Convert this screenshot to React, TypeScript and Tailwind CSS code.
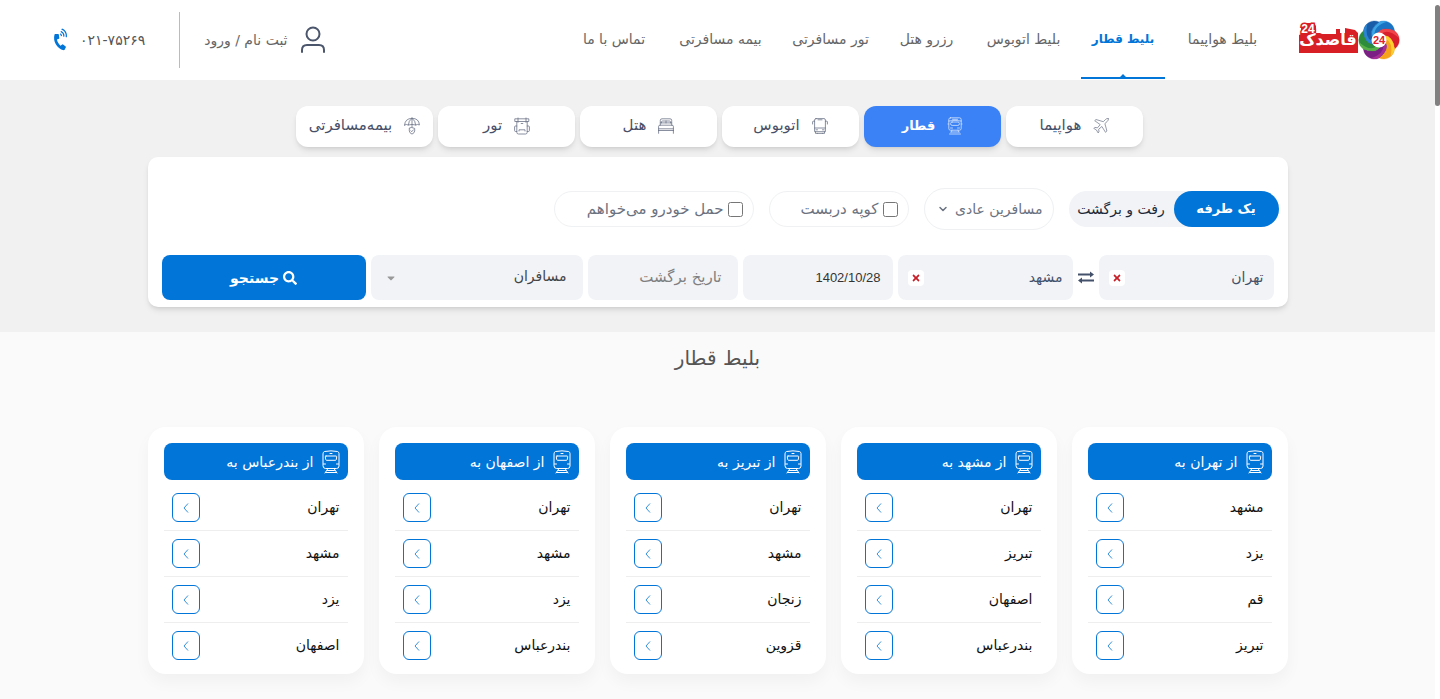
import React from "react";
import { FaPhoneVolume, FaSearch, FaTimes, FaCaretDown } from "react-icons/fa";
import { ChevronDown } from "lucide-react";

const navItems = [
  { label: "بلیط هواپیما", width: "w-[101px]" },
  { label: "بلیط قطار", width: "w-[84px]", active: true },
  { label: "بلیط اتوبوس", width: "w-[101px]" },
  { label: "رزرو هتل", width: "w-[79px]" },
  { label: "تور مسافرتی", width: "w-[99px]" },
  { label: "بیمه مسافرتی", width: "w-[107px]" },
  { label: "تماس با ما", width: "w-[92px]" },
];

function Line({ className, viewBox, children }: { className: string; viewBox: string; children: React.ReactNode }) {
  return (
    <svg className={className} viewBox={viewBox} fill="none" stroke="currentColor" strokeLinecap="round" strokeLinejoin="round" aria-hidden="true">
      {children}
    </svg>
  );
}

const PlaneIcon = () => (
  <Line className="size-4" viewBox="0 0 16 16">
    <path strokeWidth="0.7" d="M15.300.7c-.9-.6-2 0-2.800.8L10.300 3.700 3 1.500l-1.300 1.200 5.500 3.900L4.500 9.800l-2.700-.4-1 1 2.700 1.600 1.500 2.900 1-.9-.3-2.800 3.200-2.700 3.600 5.800 1.400-1.300-2-7.400 2.300-2.100C15 2.600 15.700 1.500 15.300.7z" />
  </Line>
);

const MetroIcon = () => (
  <Line className="h-[18px] w-4" viewBox="0 0 16 18">
    <g strokeWidth="0.8">
      <path d="M3.500.8h9q1.700 0 1.700 1.700v9q0 1.700-1.700 1.700h-9q-1.700 0-1.700-1.700v-9Q1.800.8 3.500.8zM5.500 2.300h5M1.800 4q6.200-1.300 12.400 0" />
      <rect x="3.600" y="5" width="8.800" height="3.400" rx="1.500" />
      <path d="M1.800 7H1M14.200 7h.8M3.500 11h2M10.500 11h2M5 13.200l-1 2M11 13.200l1 2M4 15h8M2.500 17h11" />
    </g>
  </Line>
);

const BusIcon = () => (
  <Line className="size-4" viewBox="0 0 16 16">
    <g strokeWidth="0.8">
      <path d="M4 .6h8q1.400 0 1.400 1.500v11.600H2.600V2.100Q2.600.6 4 .6zM6 1.800h4M2.600 10h10.800M4 11.800h1.500M10.500 11.800H12M3.500 13.700v1.700h2M12.500 13.700v1.700h-2M5.500 15.400h5M2.600 3.200H1.200Q.6 3.200.6 4v2M13.400 3.200h1.400q.6 0 .6.800v2" />
    </g>
  </Line>
);

const BedIcon = () => (
  <Line className="size-4" viewBox="0 0 16 16">
    <g strokeWidth="0.8">
      <path d="M2.300 7.200V2.300Q2.300.8 4 .8h8q1.700 0 1.700 1.500v4.900M3.500 4.900V4q0-1 1-1h7q1 0 1 1v.9M8 3v1.900M2.300 4.900h11.400M.6 12.500V8.400Q.6 7.200 2 7.200h12q1.400 0 1.400 1.200v4.100M.6 12.500h14.800M.6 10.800h14.800M.6 12.500v2.800M15.400 12.500v2.800" />
    </g>
  </Line>
);

const BagIcon = () => (
  <Line className="h-[18px] w-4" viewBox="0 0 16 18">
    <g strokeWidth="0.8">
      <path d="M1.200 1.800h13.600v2.700H1.200zM4 1v4.300M12 1v4.300M2.800 4.500v10.800Q2.800 17 4.500 17h7q1.700 0 1.700-1.700V4.500M2.800 9H1.500Q.6 9 .6 10v3.500q0 1 1 1h1.200M13.200 9h1.300q.9 0 .9 1v3.500q0 1-1 1h-1.200M7.200 6.500h1.600M5 14v-1.200h6V14" />
    </g>
  </Line>
);

const UmbrellaIcon = () => (
  <Line className="h-[18px] w-4" viewBox="0 0 16 18">
    <g strokeWidth="0.8">
      <path d="M.6 8Q1 1.500 8 1.400T15.400 8q-1.900-1.100-3.700 0Q8 6.900 4.300 8 2.500 6.900.6 8zM4.300 8Q4.500 3.500 8 1.400 11.500 3.500 11.700 8M8 .6V10" />
      <path d="M8 10.600l2.700.8v2.500q0 2-2.700 3.200-2.700-1.200-2.700-3.200v-2.500zM6.800 13.700l1 1 1.500-1.800" />
    </g>
  </Line>
);

const TrainIcon = () => (
  <Line className="h-6 w-[18px]" viewBox="0 0 18 24">
    <path d="M1 3.500Q1 2 2.500 1.500q6.500-1.300 13 0Q17 2 17 3.500V16q0 2.500-2.500 2.500h-11Q1 18.500 1 16z" />
    <path d="M4 6h10q.8 0 .7.800l-.4 2.700q-.1.800-.9.800H4.600q-.8 0-.9-.8l-.4-2.700Q3.200 6 4 6zM8 3.500h2M1.500 14h2M14.500 14h2M6 18.500L3 23M12 18.500l3 4.500M5.500 20.500h7M3.500 22.500h11" />
  </Line>
);

const tabs = [
  { label: "هواپیما", icon: <PlaneIcon /> },
  { label: "قطار", icon: <MetroIcon />, active: true },
  { label: "اتوبوس", icon: <BusIcon /> },
  { label: "هتل", icon: <BedIcon /> },
  { label: "تور", icon: <BagIcon /> },
  { label: "بیمه‌مسافرتی", icon: <UmbrellaIcon /> },
];

const routes = [
  { from: "تهران", to: ["مشهد", "یزد", "قم", "تبریز"] },
  { from: "مشهد", to: ["تهران", "تبریز", "اصفهان", "بندرعباس"] },
  { from: "تبریز", to: ["تهران", "مشهد", "زنجان", "قزوین"] },
  { from: "اصفهان", to: ["تهران", "مشهد", "یزد", "بندرعباس"] },
  { from: "بندرعباس", to: ["تهران", "مشهد", "یزد", "اصفهان"] },
];

const petals = [
  { dark: "#1b75c4", light: "#3da5e6" },
  { dark: "#d91f2b", light: "#f0444b" },
  { dark: "#f6a31b", light: "#fdd02e" },
  { dark: "#7b1f84", light: "#a62f96" },
  { dark: "#2c8c3c", light: "#57b047" },
  { dark: "#1a5ca8", light: "#2b86d2" },
];

function Logo() {
  return (
    <svg className="h-10 w-[102px]" viewBox="0 0 102 40" role="img" aria-label="قاصدک ۲۴">
      <path d="M1 15l4-2-2-2V6l2-3h11l2 3v7h4l2 1h14V9h4v4h5V8l10 2 3 3v20H1z" fill="#d81f26" />
      <text x="10" y="13" textAnchor="middle" fontSize="12" fontWeight="bold" fontFamily="Liberation Sans, sans-serif" fill="#fff" stroke="#d81f26" strokeWidth="3" paintOrder="stroke">24</text>
      <text x="30" y="25" textAnchor="middle" direction="rtl" fontSize="16" fontWeight="bold" fontFamily="DejaVu Sans, sans-serif" fill="#fff">قاصدک</text>
      <g transform="translate(81 20)">
        {petals.map((petal, i) => (
          <g key={petal.dark} transform={`rotate(${i * 60})`}>
            <path fill={petal.dark} stroke={petal.dark} strokeWidth="0.3" d="M0-18A11 11 0 0 1 15.600-9Q4-14-1.200-6.900A7 7 0 0 0-6.600-2.400Q-10.100-10.500 0-18z" />
            <path fill={petal.light} d="M0-18A11 11 0 0 1 8-18.200Q-5-14-4.400-5.500L-6.600-2.400Q-10.100-10.500 0-18z" />
          </g>
        ))}
        <circle r="7.500" fill="#fff" />
        <text y="4" textAnchor="middle" fontSize="11" fontWeight="bold" fontFamily="Liberation Sans, sans-serif" fill="#e3202b">24</text>
      </g>
    </svg>
  );
}

function CityField({ label, value }: { label: string; value: string }) {
  return (
    <div className="flex h-[45px] w-[175px] items-center justify-between rounded-lg bg-[#f1f3f7] px-2.5">
      <input aria-label={label} defaultValue={value} className="h-9 w-28 bg-transparent pb-0.5 text-sm text-[#44516a] outline-none" />
      <button type="button" aria-label="پاک کردن" className="flex size-4 items-center justify-center rounded-sm bg-white text-[#c81e28]">
        <FaTimes className="size-2.5" />
      </button>
    </div>
  );
}

export default function App() {
  return (
    <div dir="rtl" className="flex min-h-screen bg-[#fafafa] font-['DejaVu_Sans',sans-serif]">
      <div aria-hidden="true" className="w-[5px] shrink-0 bg-white pt-[5px]">
        <div className="h-[101px] rounded-full bg-[#808080]" />
      </div>
      <div className="min-w-0 flex-1">
        <header className="flex h-20 items-center bg-white pr-[35px] pl-[54px]">
          <a href="#home" className="shrink-0"><Logo /></a>
          <nav className="mr-[25px] flex h-20 gap-[7px] whitespace-nowrap text-[#666]">
            {navItems.map((item) => (
              <a
                key={item.label}
                href="#nav"
                className={`relative flex items-center justify-center pb-0.5 ${item.width} ${item.active ? "text-xs font-bold text-[#0275d8]" : "text-sm"}`}
              >
                {item.label}
                {item.active && (
                  <svg className="absolute bottom-px left-0 h-[5px] w-full" viewBox="0 0 84 5" preserveAspectRatio="none" fill="#0275d8" aria-hidden="true">
                    <path d="M0 3h39l3-3 3 3h39v2H0z" />
                  </svg>
                )}
              </a>
            ))}
          </nav>
          <a href="#login" className="mr-auto flex items-center gap-3 whitespace-nowrap text-sm text-[#666]">
            <svg className="h-7 w-[26px] text-[#4b566c]" viewBox="0 0 26 28" fill="none" stroke="currentColor" strokeWidth="2" strokeLinecap="round" aria-hidden="true">
              <circle cx="13" cy="8" r="6.500" />
              <path d="M2 26v-2q0-5 5-5h12q5 0 5 5v2" />
            </svg>
            ثبت نام / ورود
          </a>
          <div className="mr-6 ml-[34px] h-14 w-px bg-[#bbb]" />
          <a href="tel:02175269" dir="ltr" className="flex items-center gap-2.5 text-sm text-[#555]">
            <FaPhoneVolume className="h-5 w-4 -rotate-30 text-[#0275d8]" />
            ۰۲۱-۷۵۲۶۹
          </a>
        </header>

        <section className="bg-[#f1f1f1] px-4 pt-[26px] pb-[25px]">
          <div className="flex justify-center gap-[5px] pl-1">
            {tabs.map((tab) => (
              <button
                key={tab.label}
                type="button"
                className={`flex h-[41px] w-[137px] items-center justify-center gap-3 rounded-xl pb-0.5 whitespace-nowrap shadow-md ${tab.active ? "bg-[#3b82f6] text-[13px] font-bold text-white" : "bg-white text-[15px] text-[#475069]"}`}
              >
                <span className="opacity-80">{tab.icon}</span>
                {tab.label}
              </button>
            ))}
          </div>

          <form className="mx-auto mt-2.5 min-h-[150px] max-w-[1140px] rounded-[10px] bg-white pt-[31px] pb-[7px] shadow-md" onSubmit={(e) => e.preventDefault()}>
            <div className="flex items-center gap-[15px] pr-[9px] text-[15px] whitespace-nowrap text-[#6b7280]">
              <div className="flex h-9 w-[210px] rounded-full bg-[#f1f3f7]">
                <button type="button" className="w-[105px] rounded-full bg-[#0275d8] text-[13px] font-bold text-white">یک طرفه</button>
                <button type="button" className="w-[105px] text-sm text-[#1f2937]">رفت و برگشت</button>
              </div>
              <div className="relative flex h-[42px] w-[130px] items-center rounded-full border border-[#eef0f2]">
                <select aria-label="نوع مسافر" className="h-full w-full appearance-none rounded-full bg-transparent pr-2.5 text-sm outline-none">
                  <option>مسافرین عادی</option>
                </select>
                <ChevronDown strokeWidth={3} className="pointer-events-none absolute left-3 size-3" />
              </div>
              <label className="flex h-9 w-[140px] items-center gap-1 rounded-full border border-[#f0f1f3] pr-2.5">
                <input type="checkbox" className="size-[15px]" />
                کوپه دربست
              </label>
              <label className="flex h-9 w-[200px] items-center gap-1 rounded-full border border-[#f0f1f3] pr-2.5">
                <input type="checkbox" className="size-[15px]" />
                حمل خودرو می‌خواهم
              </label>
            </div>

            <div className="mt-[25px] flex items-center gap-[5px] px-3.5">
              <CityField label="مبدا" value="تهران" />
              <button type="button" aria-label="جابجایی" className="w-4 text-[#44516a]">
                <svg className="h-3.5 w-4" viewBox="0 0 16 14" fill="none" stroke="currentColor" strokeWidth="2" aria-hidden="true">
                  <path d="M0 3.500h13.500M16 9.500H2.500" />
                  <path d="M12 .5l4 3-4 3zM4 6.500l-4 3 4 3z" fill="currentColor" stroke="none" />
                </svg>
              </button>
              <CityField label="مقصد" value="مشهد" />
              <input aria-label="تاریخ رفت" defaultValue="1402/10/28" className="h-[45px] w-[150px] rounded-lg bg-[#f1f3f7] px-3 font-['Liberation_Sans',sans-serif] text-[13px] text-[#333]" />
              <input aria-label="تاریخ برگشت" placeholder="تاریخ برگشت" className="h-[45px] w-[150px] rounded-lg bg-[#f1f3f7] px-4 pb-0.5 text-[15px] placeholder:text-[#808080]" />
              <div className="relative flex h-[45px] w-[212px] items-center">
                <select aria-label="تعداد مسافران" className="h-full w-full appearance-none rounded-lg bg-[#f1f3f7] pr-4 pb-1 text-sm text-[#444]">
                  <option>مسافران</option>
                </select>
                <FaCaretDown className="pointer-events-none absolute left-3.5 size-3 text-[#999]" />
              </div>
              <button type="submit" className="flex h-[45px] flex-1 items-center justify-center gap-1 rounded-lg bg-[#0275d8] text-sm font-bold text-white">
                <FaSearch className="size-3.5" />
                جستجو
              </button>
            </div>
          </form>
        </section>

        <main className="px-4 pb-6">
          <h1 className="h-[95px] pt-3 text-center text-xl leading-7 text-[#555]">بلیط قطار</h1>
          <div className="mx-auto grid max-w-[1140px] grid-cols-5 gap-[15px]">
            {routes.map((route) => (
              <section key={route.from} className="rounded-[18px] bg-white px-4 pt-4 pb-1.5 shadow-[0_8px_16px_rgba(0,0,0,0.04)]">
                <h2 className="mb-[5px] flex h-[37px] items-center gap-2 rounded-lg bg-[#0275d8] pr-2 text-sm font-medium whitespace-nowrap text-white">
                  <TrainIcon />
                  از {route.from} به
                </h2>
                <ul className="divide-y divide-[#eee]">
                  {route.to.map((city) => (
                    <li key={city}>
                      <a href="#route" className="flex h-[45px] items-center justify-between px-2 text-sm text-[#111]">
                        <span className="pb-0.5">{city}</span>
                        <span className="flex h-[29px] w-7 items-center justify-center rounded-md border border-[#0275d8] text-[#0275d8]">
                          <svg className="h-2.5 w-1.5" viewBox="0 0 6 10" fill="none" stroke="currentColor" strokeWidth="0.8" aria-hidden="true">
                            <path d="M5 .5L1 5l4 4.500" />
                          </svg>
                        </span>
                      </a>
                    </li>
                  ))}
                </ul>
              </section>
            ))}
          </div>
        </main>
      </div>
    </div>
  );
}
